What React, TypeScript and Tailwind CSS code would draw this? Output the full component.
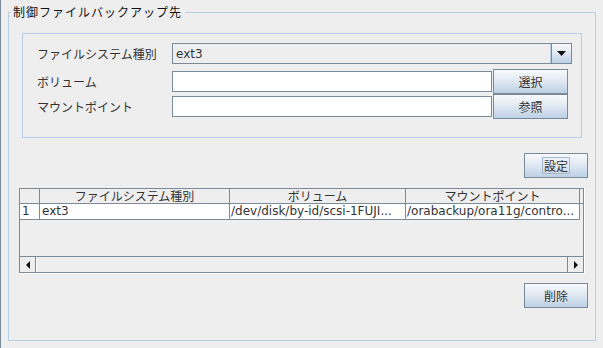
import React from "react";

const JP = "font-['Noto_Sans_CJK_JP',sans-serif]";
const LAT = "font-['DejaVu_Sans','Noto_Sans_CJK_JP',sans-serif]";

function Btn({ children, className = "" }: { children: React.ReactNode; className?: string }) {
  return (
    <div
      className={`flex items-center justify-center border border-[#7a8a99] bg-gradient-to-b from-[#f8fafd] via-[#dfe8f2] to-[#bdd0e5] text-[12px] text-[#333333] ${JP} ${className}`}
    >
      {children}
    </div>
  );
}

function Label({ children }: { children: React.ReactNode }) {
  return <div className={`w-[135px] text-[12px] leading-[16px] text-[#333333] ${JP}`}>{children}</div>;
}

export default function App() {
  return (
    <div className="w-[603px] h-[348px] bg-[#eeeeee] border-l border-[#7a8a99] pl-[7px] pt-[12px] overflow-hidden">
      <div className="relative w-[588px] h-[329px] border border-[#b8cfe5] flex flex-col">
        <div
          className={`absolute left-[2px] top-[-9px] w-[174px] h-[16px] leading-[16px] pl-[2px] bg-[#eeeeee] text-[12px] font-normal tracking-[1px] text-[#111111] whitespace-nowrap ${JP}`}
        >
          制御ファイルバックアップ先
        </div>

        {/* inner panel */}
        <div className="ml-[13px] mt-[20px] w-[560px] h-[105px] border border-[#b8cfe5] pl-[14px] pt-[9px] flex flex-col">
          <div className="flex items-center h-[21px]">
            <Label>ファイルシステム種別</Label>
            <div className="flex w-[400px] h-[21px] border border-[#7a8a99] bg-[#eeeeee]">
              <div className={`flex-1 flex items-center pl-[3px] text-[12px] text-[#333333] border-r border-[#b8cfe5] ${LAT}`}>
                ext3
              </div>
              <div className="w-[20px] h-full border-l border-[#7a8a99] bg-gradient-to-b from-[#f8fafd] via-[#dfe8f2] to-[#bdd0e5] flex items-center justify-center">
                <svg width="9" height="5" viewBox="0 0 9 5">
                  <polygon points="0,0 9,0 4.5,5" fill="#111111" />
                </svg>
              </div>
            </div>
          </div>
          <div className="flex items-center h-[25px] mt-[5px]">
            <Label>ボリューム</Label>
            <div className="w-[320px] h-[21px] border border-[#7a8a99] bg-white" />
            <Btn className="ml-[1px] w-[75px] h-[25px]">選択</Btn>
          </div>
          <div className="flex items-center h-[25px]">
            <Label>マウントポイント</Label>
            <div className="w-[320px] h-[21px] border border-[#7a8a99] bg-white" />
            <Btn className="ml-[1px] w-[75px] h-[25px]">参照</Btn>
          </div>
        </div>

        <div className="flex justify-end pr-[7px] mt-[15px]">
          <Btn className="w-[64px] h-[25px]">
            <span className="border border-[#a3b8cc] leading-[15px] px-[1px]">設定</span>
          </Btn>
        </div>

        {/* table scroll pane */}
        <div className="ml-[10px] mt-[10px] w-[566px] h-[86px] border-r border-b border-white">
          <div className="w-[565px] h-[85px] border border-[#7a8a99] flex flex-col bg-[#eeeeee]">
            <div className={`flex h-[15px] border-b border-[#7a8a99] text-[12px] leading-[14px] text-[#333333] ${JP}`}>
              <div className="w-[20px] border-r border-[#7a8a99]" />
              <div className="w-[190px] border-r border-[#7a8a99] text-center">ファイルシステム種別</div>
              <div className="w-[176px] border-r border-[#7a8a99] text-center">ボリューム</div>
              <div className="w-[174px] border-r border-[#7a8a99] text-center">マウントポイント</div>
            </div>
            <div className={`flex w-[560px] h-[16px] border-b border-[#7a8a99] bg-white text-[12px] leading-[15px] text-[#333333] ${LAT}`}>
              <div className="w-[20px] border-r border-[#7a8a99] pl-[2px]">1</div>
              <div className="w-[190px] border-r border-[#7a8a99] pl-[2px] whitespace-nowrap overflow-hidden">ext3</div>
              <div className="w-[176px] border-r border-[#7a8a99] pl-[1px] whitespace-nowrap overflow-hidden">
                /dev/disk/by-id/scsi-1FUJI...
              </div>
              <div className="w-[174px] border-r border-[#7a8a99] pl-[1px] whitespace-nowrap overflow-hidden">
                /orabackup/ora11g/contro...
              </div>
            </div>
            <div className="flex-1" />
            <div className="flex h-[16px] border-t border-[#7a8a99]">
              <div className="w-[16px] border-r border-[#7a8a99] flex items-center justify-center">
                <svg width="4" height="8" viewBox="0 0 4 8">
                  <polygon points="4,0 4,8 0,4" fill="#111111" />
                </svg>
              </div>
              <div className="flex-1 border-l border-white" />
              <div className="w-[16px] border-l border-[#7a8a99] flex items-center justify-center">
                <svg width="4" height="8" viewBox="0 0 4 8">
                  <polygon points="0,0 0,8 4,4" fill="#111111" />
                </svg>
              </div>
            </div>
          </div>
        </div>

        <div className="flex justify-end pr-[7px] mt-[9px]">
          <Btn className="w-[64px] h-[25px]">削除</Btn>
        </div>
      </div>
    </div>
  );
}
